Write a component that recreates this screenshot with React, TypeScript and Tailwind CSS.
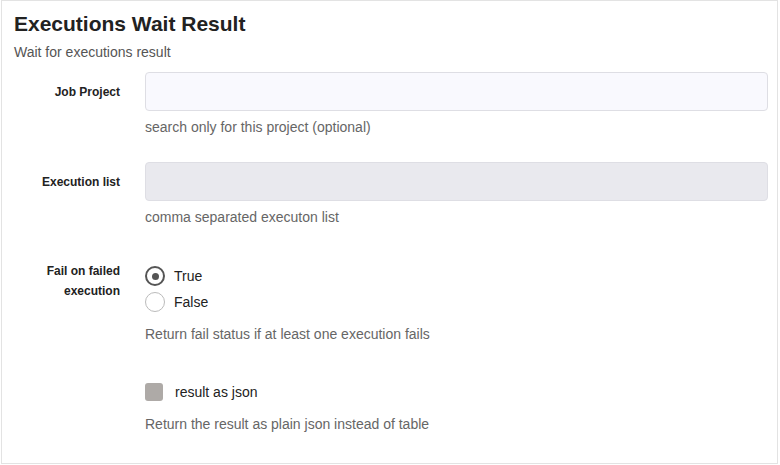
import React from "react";

const font = { fontFamily: '"Liberation Sans", Arial, sans-serif' };

function Radio({ checked, label }: { checked?: boolean; label: string }) {
  return (
    <label className="flex h-[26px] items-center">
      <span
        className={
          checked
            ? "flex h-[20px] w-[20px] items-center justify-center rounded-full border-2 border-[#555]"
            : "flex h-[20px] w-[20px] items-center justify-center rounded-full border-[1.5px] border-[#bbb]"
        }
      >
        {checked && <span className="h-[7px] w-[7px] rounded-full bg-[#555]" />}
      </span>
      <span className="ml-[9px] text-[14px] text-[#222]">{label}</span>
    </label>
  );
}

export default function App() {
  return (
    <div className="h-[465px] w-[780px] bg-white" style={font}>
      <div className="ml-[1px] h-[464px] w-[777px] border border-[#e3e3e3] bg-white pl-[12px] pr-[9px] pt-[9px]">
        <h1 className="text-[21px] font-bold leading-[28px] text-[#222]">Executions Wait Result</h1>
        <p className="mt-[4px] text-[14px] leading-[20px] text-[#555]">Wait for executions result</p>

        <div className="mt-[10px] flex">
          <div className="flex h-[39px] w-[106px] items-center justify-end text-[12px] font-bold text-[#222]">
            Job Project
          </div>
          <div className="ml-[25px] flex-1">
            <input
              className="block h-[39px] w-full rounded-[4px] border border-[#dedee4] bg-[#f9f9fe] px-3 outline-none"
              type="text"
            />
            <p className="mt-[6px] text-[14px] leading-[20px] text-[#666]">search only for this project (optional)</p>
          </div>
        </div>

        <div className="mt-[25px] flex">
          <div className="flex h-[39px] w-[106px] items-center justify-end text-[12px] font-bold text-[#222]">
            Execution list
          </div>
          <div className="ml-[25px] flex-1">
            <input
              className="block h-[39px] w-full rounded-[4px] border border-[#dedee4] bg-[#e9e9ee] px-3 outline-none"
              type="text"
            />
            <p className="mt-[6px] text-[14px] leading-[20px] text-[#666]">comma separated executon list</p>
          </div>
        </div>

        <div className="mt-[34px] flex">
          <div className="w-[106px] text-right text-[12px] font-bold leading-[20px] text-[#222]">
            Fail on failed
            <br />
            execution
          </div>
          <div className="ml-[25px] flex-1 pt-[2px]">
            <Radio checked label="True" />
            <Radio label="False" />
            <p className="mt-[9px] text-[14px] leading-[20px] text-[#666]">
              Return fail status if at least one execution fails
            </p>
          </div>
        </div>

        <div className="mt-[38px] flex">
          <div className="w-[106px]" />
          <div className="ml-[25px] flex-1">
            <label className="flex h-[20px] items-center">
              <span className="h-[18px] w-[18px] rounded-[3px] bg-[#aeaaa7]" />
              <span className="ml-[12px] text-[14px] text-[#222]">result as json</span>
            </label>
            <p className="mt-[12px] text-[14px] leading-[20px] text-[#666]">
              Return the result as plain json instead of table
            </p>
          </div>
        </div>
      </div>
    </div>
  );
}
